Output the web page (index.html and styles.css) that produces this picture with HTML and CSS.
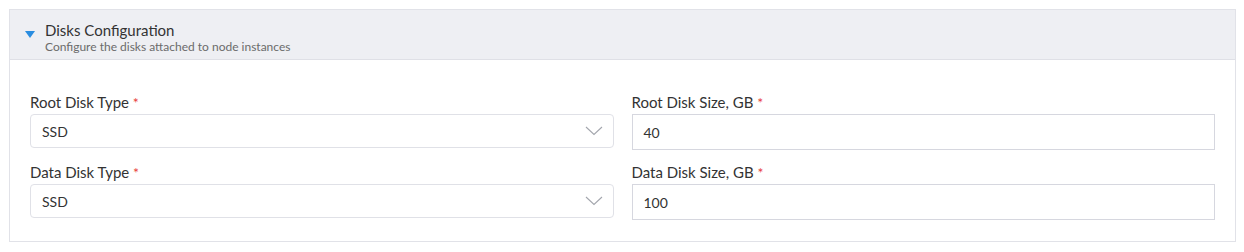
FILE: index.html
```html
<!DOCTYPE html>
<html lang="en">
<head>
    <meta charset="UTF-8">
    <title>Disks Configuration</title>
    <link rel="stylesheet" href="styles.css">
</head>
<body>
    <div class="panel">
        <div class="panel-header">
            <span class="caret"></span>
            <div>
                <div class="panel-title">Disks Configuration</div>
                <div class="panel-subtitle">Configure the disks attached to node instances</div>
            </div>
        </div>
        <div class="panel-body">
            <div class="field">
                <label>Root Disk Type <span class="req">*</span></label>
                <div class="select">
                    <span>SSD</span>
                    <svg width="18" height="10" viewBox="0 0 18 10"><path d="M1 1 L9 8.5 L17 1" fill="none" stroke="#a3a6ad" stroke-width="1.1"/></svg>
                </div>
            </div>
            <div class="field">
                <label>Root Disk Size, GB <span class="req">*</span></label>
                <div class="input">40</div>
            </div>
            <div class="field">
                <label>Data Disk Type <span class="req">*</span></label>
                <div class="select">
                    <span>SSD</span>
                    <svg width="18" height="10" viewBox="0 0 18 10"><path d="M1 1 L9 8.5 L17 1" fill="none" stroke="#a3a6ad" stroke-width="1.1"/></svg>
                </div>
            </div>
            <div class="field">
                <label>Data Disk Size, GB <span class="req">*</span></label>
                <div class="input">100</div>
            </div>
        </div>
    </div>
</body>
</html>
```
FILE: styles.css
```css
body {
    margin: 0;
    padding: 9px 8px 0 9px;
    font-family: Lato, "Open Sans", sans-serif;
    color: #333;
    background: #fff;
}
.panel {
    border: 1px solid #e1e2e8;
}
.panel-header {
    display: flex;
    align-items: flex-start;
    gap: 10px;
    height: 50px;
    padding: 11px 0 0 15px;
    background: #eeeff3;
    border-bottom: 1px solid #dfe0e6;
    box-sizing: border-box;
}
.caret {
    width: 0;
    height: 0;
    margin-top: 10px;
    border-left: 5px solid transparent;
    border-right: 5px solid transparent;
    border-top: 7px solid #2a8de0;
}
.panel-title {
    font-size: 15px;
    line-height: 18px;
    color: #333;
}
.panel-subtitle {
    font-size: 12px;
    line-height: 15px;
    color: #6b6b6b;
}
.panel-body {
    display: grid;
    grid-template-columns: 1fr 1fr;
    column-gap: 18px;
    row-gap: 12px;
    padding: 32px 20px 21px 20px;
}
.field label {
    display: block;
    font-size: 15px;
    line-height: 20px;
    margin-bottom: 1px;
}
.req {
    color: #e8413d;
    font-size: 14px;
}
.select {
    display: flex;
    align-items: center;
    justify-content: space-between;
    height: 34px;
    box-sizing: border-box;
    padding: 0 10px 0 11px;
    border: 1px solid #e0e1e7;
    border-radius: 4px;
    font-size: 14px;
}
.input {
    display: flex;
    align-items: center;
    height: 36px;
    box-sizing: border-box;
    padding: 0 10px 0 11px;
    border: 1px solid #d6d7df;
    font-size: 14px;
}
```
